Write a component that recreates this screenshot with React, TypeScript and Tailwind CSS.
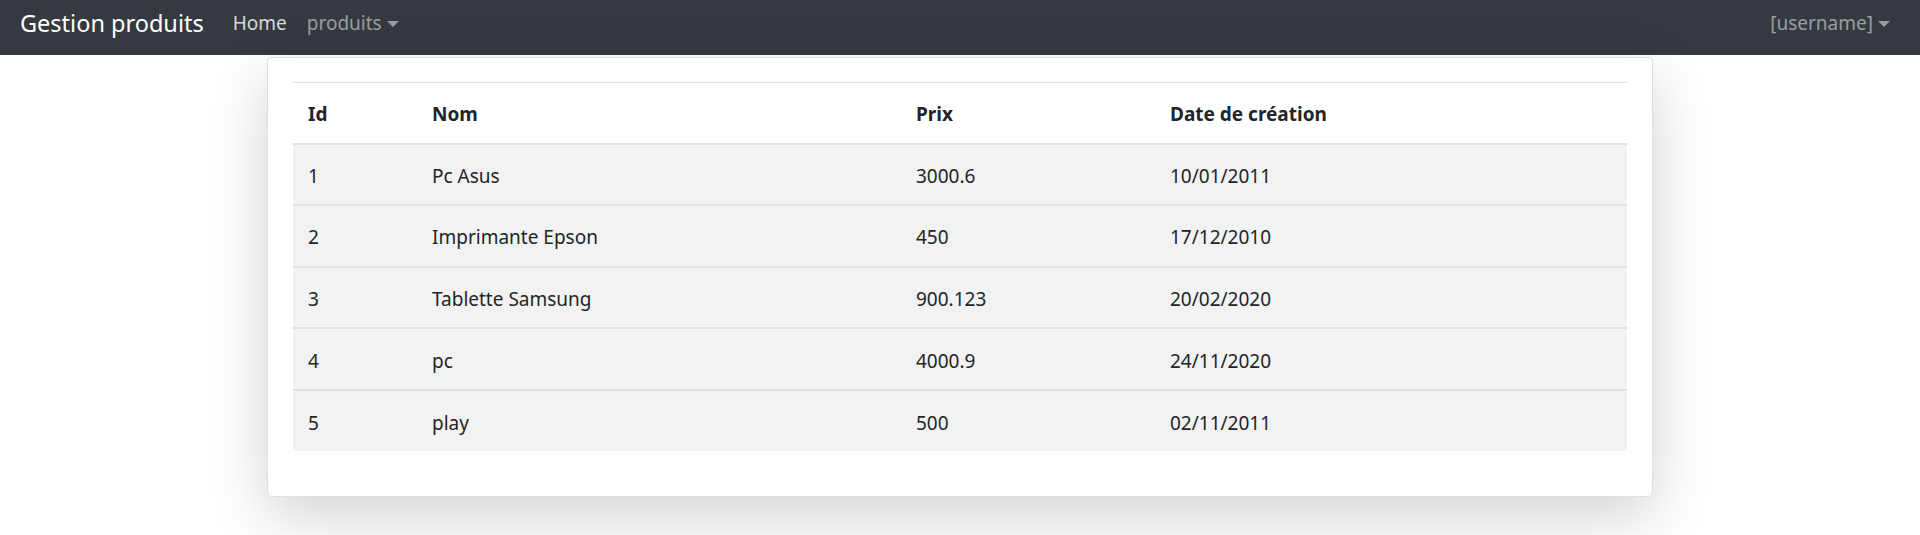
import React from "react";

const rows = [
  ["1", "Pc Asus", "3000.6", "10/01/2011"],
  ["2", "Imprimante Epson", "450", "17/12/2010"],
  ["3", "Tablette Samsung", "900.123", "20/02/2020"],
  ["4", "pc", "4000.9", "24/11/2020"],
  ["5", "play", "500", "02/11/2011"],
];

const widths = ["w-[124px]", "w-[484px]", "w-[254px]", "w-auto"];

function Caret() {
  return (
    <span className="ml-[5px] inline-block h-0 w-0 border-x-[6px] border-t-[6px] border-x-transparent border-t-current align-[3px]" />
  );
}

export default function App() {
  return (
    <div
      className="min-h-[535px] bg-white text-[#212529]"
      style={{ fontFamily: '"Noto Sans", "Open Sans", sans-serif' }}
    >
      <nav className="flex h-[55px] items-center bg-[#343a40] px-[20px]">
        <span className="mr-[19px] pb-[9px] text-[23.5px] leading-[30px] text-white">Gestion produits</span>
        <div className="flex items-center pb-[9px]">
          <span className="px-[10px] text-[19px] leading-[30px] text-white/80">Home</span>
          <span className="px-[10px] text-[19px] leading-[30px] text-white/50">
            produits
            <Caret />
          </span>
        </div>
        <div className="ml-auto pb-[9px]">
          <span className="px-[10px] text-[19px] leading-[30px] text-white/50">
            [username]
            <Caret />
          </span>
        </div>
      </nav>
      <div className="mx-auto mt-[2px] w-[1386px] rounded-[5px] border border-black/[.125] bg-white px-[25px] pt-[24px] pb-[45px] shadow-[0_20px_60px_rgba(0,0,0,0.175)]">
        <table className="w-full table-fixed border-collapse text-[19px] leading-[30px]">
          <thead>
            <tr className="border-t border-[#dee2e6]">
              {["Id", "Nom", "Prix", "Date de création"].map((h, i) => (
                <th key={h} className={`${widths[i]} h-[61px] px-[15px] pt-[3px] text-left font-bold`}>
                  {h}
                </th>
              ))}
            </tr>
          </thead>
          <tbody>
            {rows.map((r) => (
              <tr key={r[0]} className="border-t-2 border-[#dee2e6] bg-[#f2f2f2]">
                {r.map((c, i) => (
                  <td key={i} className="h-[61.6px] px-[15px] pt-[3px] align-middle">
                    {c}
                  </td>
                ))}
              </tr>
            ))}
          </tbody>
        </table>
      </div>
    </div>
  );
}
